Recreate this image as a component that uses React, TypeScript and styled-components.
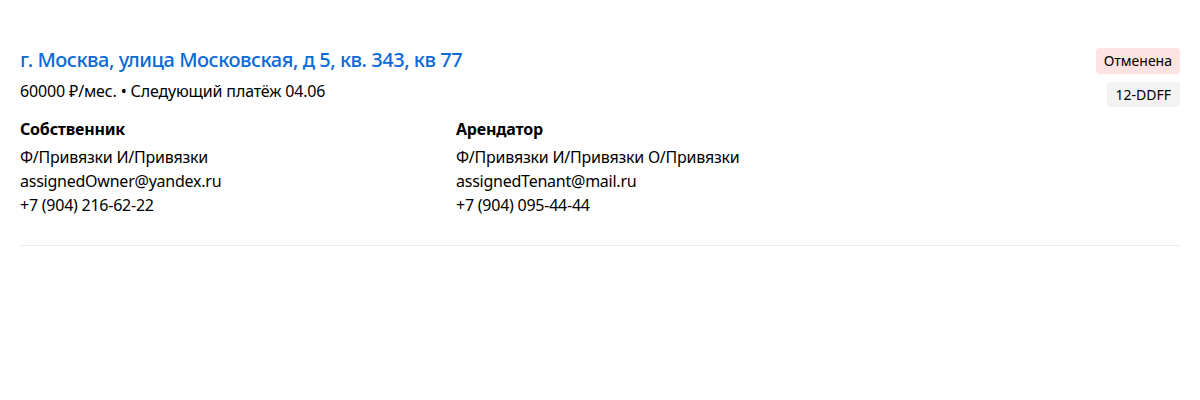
import React from 'react';
import styled, { createGlobalStyle } from 'styled-components';

const GlobalStyle = createGlobalStyle`
  body {
    margin: 0;
    background: #fff;
    font-family: "Noto Sans", "Open Sans", sans-serif;
    color: #000;
  }
`;

interface Party {
    role: string;
    name: string;
    email: string;
    phone: string;
}

const parties: Party[] = [
    {
        role: 'Собственник',
        name: 'Ф/Привязки И/Привязки',
        email: 'assignedOwner@yandex.ru',
        phone: '+7 (904) 216-62-22',
    },
    {
        role: 'Арендатор',
        name: 'Ф/Привязки И/Привязки О/Привязки',
        email: 'assignedTenant@mail.ru',
        phone: '+7 (904) 095-44-44',
    },
];

const App: React.FC = () => {
    return (
        <>
            <GlobalStyle />
            <Card>
                <Top>
                    <Info>
                        <Address href="#">г. Москва, улица Московская, д 5, кв. 343, кв 77</Address>
                        <Payment>60000 ₽/мес. • Следующий платёж 04.06</Payment>
                    </Info>
                    <Badges>
                        <Badge kind="danger">Отменена</Badge>
                        <Badge kind="neutral">12-DDFF</Badge>
                    </Badges>
                </Top>
                <Parties>
                    {parties.map((p) => (
                        <PartyBlock key={p.role}>
                            <Role>{p.role}</Role>
                            <Line>{p.name}</Line>
                            <Line>{p.email}</Line>
                            <Line>{p.phone}</Line>
                        </PartyBlock>
                    ))}
                </Parties>
            </Card>
        </>
    );
};

export default App;

const Card = styled.div`
  margin: 0 20px;
  padding: 46px 0 28px;
  border-bottom: 1px solid #ebebeb;
`;

const Top = styled.div`
  display: flex;
  justify-content: space-between;
  align-items: flex-start;
`;

const Info = styled.div`
  display: flex;
  flex-direction: column;
`;

const Address = styled.a`
  font-size: 20px;
  line-height: 28px;
  font-weight: 500;
  color: #0a6ad6;
  text-decoration: none;
  letter-spacing: -0.47px;
`;

const Payment = styled.div`
  margin-top: 6px;
  font-size: 16px;
  line-height: 22px;
  letter-spacing: -0.15px;
`;

const Badges = styled.div`
  display: flex;
  flex-direction: column;
  align-items: flex-end;
  gap: 8px;
  padding-top: 2px;
`;

const Badge = styled.span<{ kind: 'danger' | 'neutral' }>`
  display: inline-block;
  padding: 0 ${(p) => (p.kind === 'danger' ? 8 : 9)}px;
  height: ${(p) => (p.kind === 'danger' ? 26 : 25)}px;
  line-height: ${(p) => (p.kind === 'danger' ? 26 : 25)}px;
  font-size: 14px;
  border-radius: 4px;
  background: ${(p) => (p.kind === 'danger' ? '#fde3e3' : '#f3f3f3')};
`;

const Parties = styled.div`
  display: grid;
  grid-template-columns: 436px 1fr;
  margin-top: 10px;
`;

const PartyBlock = styled.div`
  display: flex;
  flex-direction: column;
`;

const Role = styled.div`
  font-size: 16px;
  font-weight: 700;
  line-height: 24px;
  margin-bottom: 4px;
  letter-spacing: -0.2px;
`;

const Line = styled.div`
  font-size: 16px;
  line-height: 24px;
  letter-spacing: -0.24px;
`;
